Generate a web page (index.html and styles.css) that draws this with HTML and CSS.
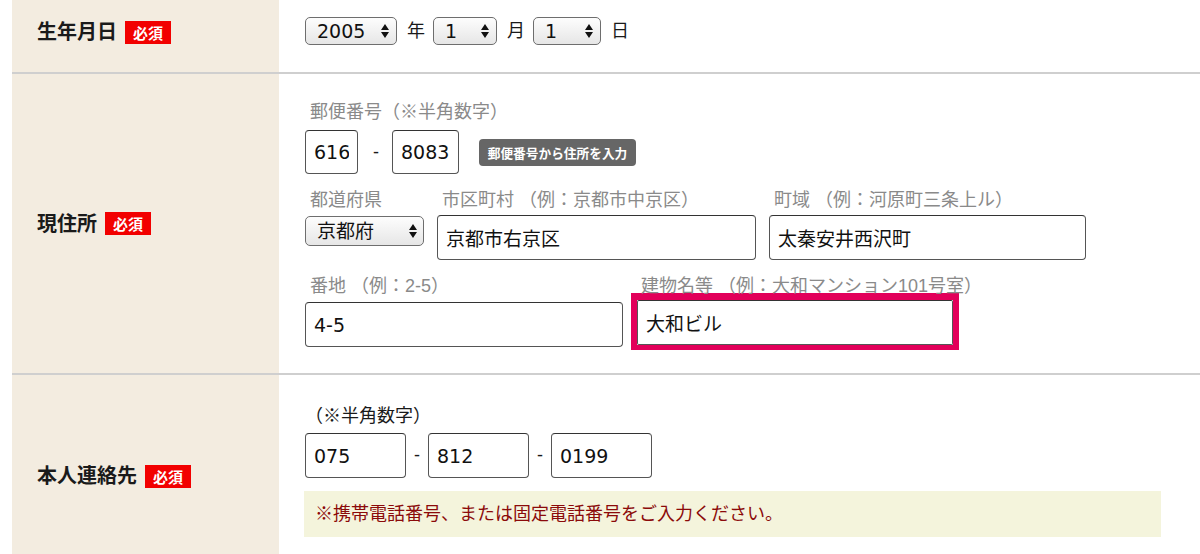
FILE: index.html
```html
<!DOCTYPE html>
<html lang="ja">
  <head>
    <meta charset="UTF-8" />
    <title>お申し込みフォーム</title>
    <link rel="stylesheet" href="styles.css">
  </head>
  <body>
    <div class="form">
      <!-- 生年月日 -->
      <div class="row row-birth">
        <div class="head"><span class="headText">生年月日</span><span class="req">必須</span></div>
        <div class="body bodyBirth">
          <span class="sel selYear">
            <select><option>2005</option></select>
            <svg width="8" height="16" viewBox="0 0 8 16"><path d="M4 1 L8 7 L0 7 Z M4 15 L8 9 L0 9 Z" fill="#111"/></svg>
          </span>
          <span class="unit">年</span>
          <span class="sel selMonth">
            <select><option>1</option></select>
            <svg width="8" height="16" viewBox="0 0 8 16"><path d="M4 1 L8 7 L0 7 Z M4 15 L8 9 L0 9 Z" fill="#111"/></svg>
          </span>
          <span class="unit">月</span>
          <span class="sel selDay">
            <select><option>1</option></select>
            <svg width="8" height="16" viewBox="0 0 8 16"><path d="M4 1 L8 7 L0 7 Z M4 15 L8 9 L0 9 Z" fill="#111"/></svg>
          </span>
          <span class="unit">日</span>
        </div>
      </div>

      <!-- 現住所 -->
      <div class="row">
        <div class="head"><span class="headText">現住所</span><span class="req">必須</span></div>
        <div class="body bodyAddress">
          <div class="fieldLabel">郵便番号（※半角数字）</div>
          <div class="zipLine">
            <input type="text" class="zip1" value="616" />
            <span class="dash">-</span>
            <input type="text" class="zip2" value="8083" />
            <button class="zipButton">郵便番号から住所を入力</button>
          </div>
          <div class="addrLine">
            <div class="col colPref">
              <div class="fieldLabel">都道府県</div>
              <span class="sel selPref">
                <select><option>京都府</option></select>
                <svg width="8" height="16" viewBox="0 0 8 16"><path d="M4 1 L8 7 L0 7 Z M4 15 L8 9 L0 9 Z" fill="#111"/></svg>
              </span>
            </div>
            <div class="col colCity">
              <div class="fieldLabel">市区町村 （例：京都市中京区）</div>
              <input type="text" value="京都市右京区" />
            </div>
            <div class="col colTown">
              <div class="fieldLabel">町域 （例：河原町三条上ル）</div>
              <input type="text" value="太秦安井西沢町" />
            </div>
          </div>
          <div class="addrLine addrLine2">
            <div class="col colBanchi">
              <div class="fieldLabel">番地 （例：2-5）</div>
              <input type="text" value="4-5" />
            </div>
            <div class="col colBuilding">
              <div class="fieldLabel">建物名等 （例：大和マンション101号室）</div>
              <span class="marked"><input type="text" value="大和ビル" /></span>
            </div>
          </div>
        </div>
      </div>

      <!-- 本人連絡先 -->
      <div class="row row-tel">
        <div class="head"><span class="headText">本人連絡先</span><span class="req">必須</span></div>
        <div class="body bodyTel">
          <div class="telLabel">（※半角数字）</div>
          <div class="telLine">
            <input type="text" value="075" />
            <span class="dash">-</span>
            <input type="text" value="812" />
            <span class="dash">-</span>
            <input type="text" value="0199" />
          </div>
          <div class="notice">※携帯電話番号、または固定電話番号をご入力ください。</div>
        </div>
      </div>
    </div>
  </body>
</html>
```

FILE: styles.css
```css
body {
  margin: 0;
  font-family: "Liberation Sans", "Noto Sans CJK JP", sans-serif;
  color: #1a1a1a;
  overflow: hidden;
}

.form {
  margin-left: 12px;
}

.row {
  display: grid;
  grid-template-columns: 267px 1fr;
  border-bottom: 2px solid #cfcfcf;
}

.head {
  background-color: #f3ece0;
  display: flex;
  align-items: center;
  padding-left: 25px;
}

.headText {
  font-size: 20px;
  font-weight: bold;
  line-height: 24px;
}

.req {
  display: inline-block;
  margin-left: 8px;
  width: 46px;
  height: 23px;
  line-height: 23px;
  background-color: #f20000;
  color: #fff;
  font-family: "Noto Sans CJK JP", sans-serif;
  font-size: 15px;
  font-weight: bold;
  text-align: center;
}

.body {
  padding-left: 26px;
}

/* 生年月日 */
.row-birth .head {
  padding-bottom: 8px;
}

.bodyBirth {
  display: flex;
  align-items: center;
  padding-top: 17px;
  padding-bottom: 27px;
}

.unit {
  font-size: 18px;
  line-height: 20px;
  margin: 0 8px 0 10px;
}

.sel {
  position: relative;
  display: inline-block;
}

.sel select {
  appearance: none;
  -webkit-appearance: none;
  display: block;
  height: 28px;
  border: 1px solid #6e6e6e;
  border-radius: 5px;
  background: linear-gradient(#fdfdfd, #e6e6e6);
  font-family: "DejaVu Sans", "Noto Sans CJK JP", sans-serif;
  font-size: 19px;
  color: #111;
  padding: 0 0 0 11px;
  margin: 0;
}

.sel svg {
  position: absolute;
  right: 8px;
  top: 6px;
  pointer-events: none;
}

.selYear select {
  width: 92px;
}

.selMonth select {
  width: 64px;
}

.selDay select {
  width: 68px;
}

.selPref {
  margin-top: 1px;
}

.selPref select {
  width: 119px;
  height: 30px;
}

.selPref svg {
  right: 7px;
  top: 7px;
}

/* 入力欄 */
input[type="text"] {
  box-sizing: border-box;
  height: 45px;
  border: 1px solid #555;
  border-top-color: #333;
  border-radius: 4px;
  padding: 0 8px;
  margin: 0;
  font-family: "DejaVu Sans", "Noto Sans CJK JP", sans-serif;
  font-size: 19px;
  color: #111;
  background-color: #fff;
}

.dash {
  font-size: 18px;
  margin: 0 8px;
}

/* 現住所 */
.bodyAddress {
  padding-top: 28px;
  padding-bottom: 26px;
}

.fieldLabel {
  font-size: 18px;
  line-height: 20px;
  color: #8a8a8a;
  padding-left: 5px;
  white-space: nowrap;
}

.zipLine {
  display: flex;
  align-items: center;
  margin-top: 8px;
}

.zipLine input {
  height: 44px;
}

.zipLine .dash {
  margin: 0 13px 0 15px;
}

.zip1 {
  width: 53px;
}

.zip2 {
  width: 67px;
}

.zipButton {
  margin-left: 20px;
  height: 27px;
  width: 157px;
  padding: 0;
  border: none;
  border-radius: 4px;
  background-color: #666;
  color: #fff;
  font-family: "Noto Sans CJK JP", sans-serif;
  font-size: 12.7px;
  font-weight: bold;
}

.addrLine {
  display: flex;
  gap: 13px;
  margin-top: 16px;
}

.addrLine .fieldLabel {
  margin-bottom: 5px;
}

.addrLine2 {
  gap: 14px;
}

.addrLine2 .fieldLabel {
  margin-bottom: 6px;
}

.colPref {
  width: 119px;
}

.colCity input {
  width: 319px;
}

.colTown input {
  width: 317px;
}

.colBanchi input {
  width: 318px;
}

.addrLine2 .colBuilding .fieldLabel {
  padding-left: 4px;
  margin-bottom: 4px;
}

.colBuilding input {
  width: 316px;
  border-radius: 2px;
}

/* 注目枠 */
.marked {
  display: block;
  width: 316px;
  margin: -7px -6px -5px;
  border: 6px solid #e2005a;
  border-top-width: 7px;
  border-bottom-width: 5px;
  line-height: 0;
}

/* 本人連絡先 */
.row-tel {
  border-bottom: none;
}

.bodyTel {
  padding-top: 31px;
  padding-bottom: 40px;
}

.telLabel {
  font-size: 18px;
  line-height: 20px;
  color: #1a1a1a;
}

.telLine {
  display: flex;
  align-items: center;
  margin-top: 7px;
}

.telLine input {
  width: 101px;
}

.notice {
  margin-top: 13px;
  margin-left: -1px;
  width: 846px;
  height: 46px;
  line-height: 46px;
  padding-left: 11px;
  background-color: #f4f4dc;
  color: #8b0a0a;
  font-size: 18px;
}
```
